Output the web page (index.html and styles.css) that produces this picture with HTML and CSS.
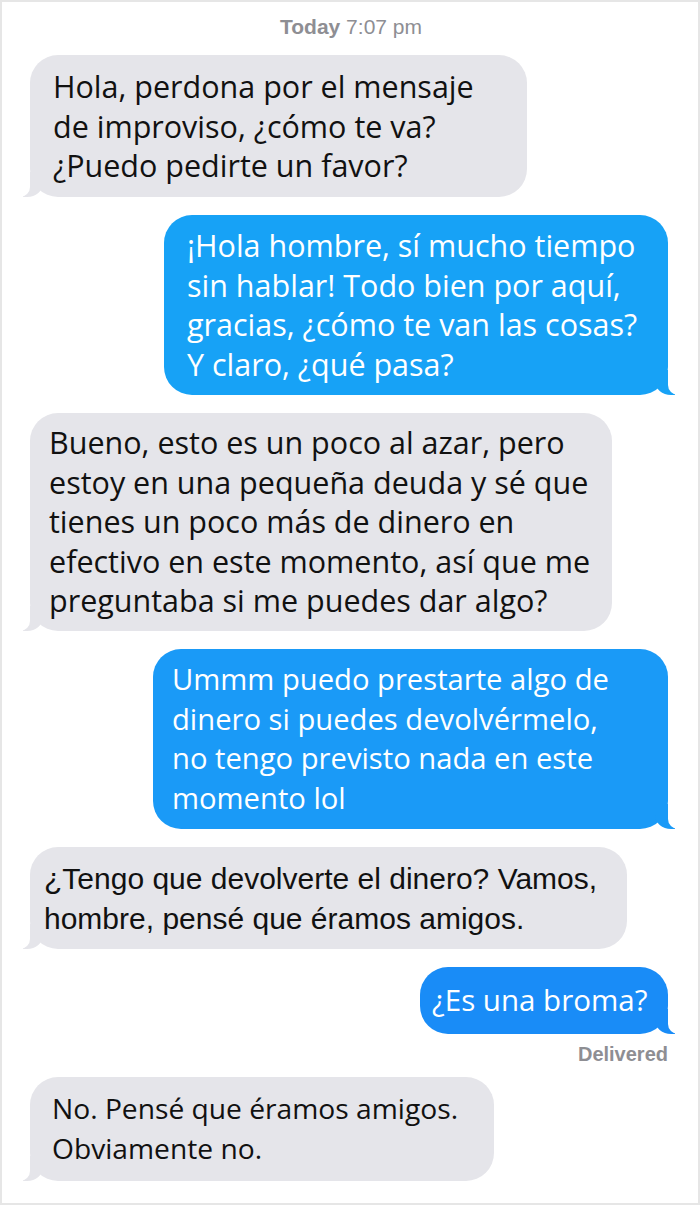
FILE: index.html
```html
<!DOCTYPE html>
<html>
<head>
    <title>Messages</title>
    <link rel="stylesheet" href="styles.css">
</head>
<body>
    <div class="thread">
        <div class="stamp"><b>Today</b> 7:07 pm</div>

        <div class="bubble left b1">Hola, perdona por el mensaje<br>de improviso, ¿cómo te va?<br>¿Puedo pedirte un favor?</div>

        <div class="bubble right b2">¡Hola hombre, sí mucho tiempo<br>sin hablar! Todo bien por aquí,<br>gracias, ¿cómo te van las cosas?<br>Y claro, ¿qué pasa?</div>

        <div class="bubble left b3">Bueno, esto es un poco al azar, pero<br>estoy en una pequeña deuda y sé que<br>tienes un poco más de dinero en<br>efectivo en este momento, así que me<br>preguntaba si me puedes dar algo?</div>

        <div class="bubble right b4">Ummm puedo prestarte algo de<br>dinero si puedes devolvérmelo,<br>no tengo previsto nada en este<br>momento lol</div>

        <div class="bubble left b5">¿Tengo que devolverte el dinero? Vamos,<br>hombre, pensé que éramos amigos.</div>

        <div class="bubble right b6">¿Es una broma?</div>
        <div class="status">Delivered</div>

        <div class="bubble left b7">No. Pensé que éramos amigos.<br>Obviamente no.</div>
    </div>
</body>
</html>
```

FILE: styles.css
```css
body {
    margin: 0;
    padding: 0;
    background: #fff;
}
.thread {
    width: 700px;
    height: 1205px;
    box-sizing: border-box;
    border: 2px solid #e6e6e6;
    display: flex;
    flex-direction: column;
    padding: 0 30px 0 28px;
    font-family: "Open Sans", Lato, sans-serif;
    font-size: 30.5px;
    line-height: 39.5px;
    color: #111;
}
.stamp {
    align-self: center;
    height: 53px;
    line-height: 50px;
    font-family: "Liberation Sans", Arial, sans-serif;
    font-size: 21px;
    color: #8e8e93;
    margin-left: 4px;
}
.stamp b {
    font-weight: bold;
}
.bubble {
    position: relative;
    border-radius: 28px;
    white-space: nowrap;
    box-sizing: border-box;
    margin-bottom: 18px;
}
.left {
    align-self: flex-start;
    background: #e5e5ea;
}
.right {
    align-self: flex-end;
    background: #1a9af7;
    color: #fff;
}
.left::before {
    content: "";
    position: absolute;
    bottom: 0;
    left: -7px;
    width: 20px;
    height: 25px;
    background: #e5e5ea;
    border-bottom-right-radius: 16px 14px;
}
.left::after {
    content: "";
    position: absolute;
    bottom: 0;
    left: -26px;
    width: 26px;
    height: 25px;
    background: #fff;
    border-bottom-right-radius: 10px;
}
.right::before {
    content: "";
    position: absolute;
    bottom: 0;
    right: -7px;
    width: 20px;
    height: 25px;
    background: inherit;
    border-bottom-left-radius: 16px 14px;
}
.right::after {
    content: "";
    position: absolute;
    bottom: 0;
    right: -26px;
    width: 26px;
    height: 25px;
    background: #fff;
    border-bottom-left-radius: 10px;
}
.b1 {
    width: 497px;
    height: 142px;
    padding: 12px 0 0 23px;
}
.b2 {
    width: 504px;
    height: 180px;
    padding: 11px 0 0 23px;
    background: #17a2f6;
}
.b3 {
    width: 582px;
    height: 218px;
    padding: 10px 0 0 19px;
}
.b4 {
    width: 515px;
    height: 180px;
    padding: 11px 0 0 19px;
    font-size: 29.2px;
    background: #1a9af7;
}
.b5 {
    width: 597px;
    height: 102px;
    padding: 12px 0 0 14px;
    font-family: "Liberation Sans", Arial, sans-serif;
    font-size: 30px;
}
.b6 {
    width: 248px;
    height: 67px;
    padding: 14px 0 0 12px;
    line-height: 38px;
    font-family: "Open Sans", sans-serif;
    font-size: 29.5px;
    background: #198cf7;
    margin-bottom: 6px;
}
.status {
    align-self: flex-end;
    height: 37px;
    line-height: 28px;
    font-family: "Liberation Sans", Arial, sans-serif;
    font-weight: bold;
    font-size: 20px;
    color: #8e8e93;
}
.b7 {
    width: 464px;
    height: 104px;
    padding: 12px 0 0 22px;
    font-size: 28.2px;
}
```
